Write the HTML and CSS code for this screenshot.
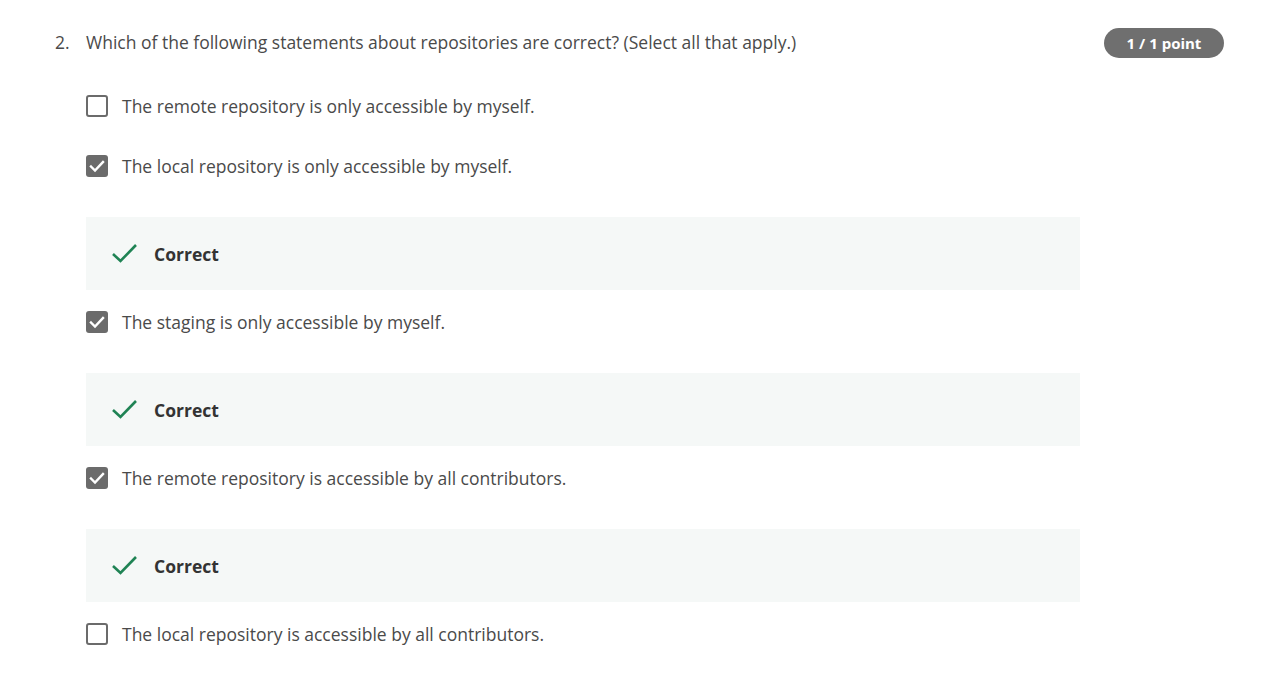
FILE: index.html
```html
<!DOCTYPE html>
<html lang="en">
<head>
<meta charset="utf-8">
<title>Quiz question</title>
<link rel="stylesheet" href="styles.css">
</head>
<body>
<div class="question">
  <div class="question-head">
    <span class="q-num">2.</span>
    <span class="q-text">Which of the following statements about repositories are correct? (Select all that apply.)</span>
    <span class="badge">1 / 1 point</span>
  </div>
  <div class="options">
    <div class="option">
      <span class="box"></span>
      <span class="label">The remote repository is only accessible by myself.</span>
    </div>
    <div class="option">
      <span class="box checked"><svg viewBox="0 0 22 22" width="22" height="22"><path d="M5 11.5 L9 15.5 L17 7" fill="none" stroke="#fff" stroke-width="2.4" stroke-linecap="square"/></svg></span>
      <span class="label">The local repository is only accessible by myself.</span>
    </div>
    <div class="feedback">
      <svg class="tick" viewBox="0 0 28 22" width="28" height="22"><path d="M2 12 L9.5 19 L25 3" fill="none" stroke="#1f8354" stroke-width="2.6"/></svg>
      <span class="fb-text">Correct</span>
    </div>
    <div class="option">
      <span class="box checked"><svg viewBox="0 0 22 22" width="22" height="22"><path d="M5 11.5 L9 15.5 L17 7" fill="none" stroke="#fff" stroke-width="2.4" stroke-linecap="square"/></svg></span>
      <span class="label">The staging is only accessible by myself.</span>
    </div>
    <div class="feedback">
      <svg class="tick" viewBox="0 0 28 22" width="28" height="22"><path d="M2 12 L9.5 19 L25 3" fill="none" stroke="#1f8354" stroke-width="2.6"/></svg>
      <span class="fb-text">Correct</span>
    </div>
    <div class="option">
      <span class="box checked"><svg viewBox="0 0 22 22" width="22" height="22"><path d="M5 11.5 L9 15.5 L17 7" fill="none" stroke="#fff" stroke-width="2.4" stroke-linecap="square"/></svg></span>
      <span class="label">The remote repository is accessible by all contributors.</span>
    </div>
    <div class="feedback">
      <svg class="tick" viewBox="0 0 28 22" width="28" height="22"><path d="M2 12 L9.5 19 L25 3" fill="none" stroke="#1f8354" stroke-width="2.6"/></svg>
      <span class="fb-text">Correct</span>
    </div>
    <div class="option">
      <span class="box"></span>
      <span class="label">The local repository is accessible by all contributors.</span>
    </div>
  </div>
</div>
</body>
</html>
```
FILE: styles.css
```css
html, body {
  margin: 0;
  padding: 0;
  background: #ffffff;
}
body {
  font-family: "Open Sans", "Noto Sans", sans-serif;
  color: #4a4a4a;
}
.question {
  padding: 28px 62px 0 55px;
}
.question-head {
  display: flex;
  align-items: center;
  height: 30px;
}
.q-num {
  width: 31px;
  font-size: 17.5px;
  color: #4a4a4a;
  padding-bottom: 3px;
}
.q-text {
  flex: 1;
  font-size: 17.5px;
  color: #4a4a4a;
  padding-bottom: 3px;
}
.badge {
  width: 120px;
  height: 30px;
  border-radius: 15px;
  background: #6f6f6f;
  color: #ffffff;
  font-weight: 700;
  font-size: 15px;
  display: flex;
  align-items: center;
  justify-content: center;
}
.options {
  padding-left: 31px;
  padding-top: 36px;
  width: 994px;
}
.option {
  display: flex;
  align-items: center;
  height: 24px;
  margin-bottom: 36px;
}
.option + .feedback {
  margin-top: 39px;
}
.box {
  box-sizing: border-box;
  width: 22px;
  height: 22px;
  border: 2px solid #6b6b6b;
  border-radius: 3px;
  margin-right: 14px;
  flex: none;
}
.box.checked {
  background: #6b6b6b;
  border: none;
}
.box svg {
  display: block;
}
.label {
  font-size: 17.5px;
  color: #4a4a4a;
}
.feedback {
  height: 73px;
  background: #f5f8f7;
  display: flex;
  align-items: center;
  padding-left: 25px;
  margin-bottom: 20px;
}
.tick {
  display: block;
  margin-right: 15px;
  margin-top: -1px;
}
.fb-text {
  font-size: 17.5px;
  font-weight: 700;
  color: #333333;
}
```
